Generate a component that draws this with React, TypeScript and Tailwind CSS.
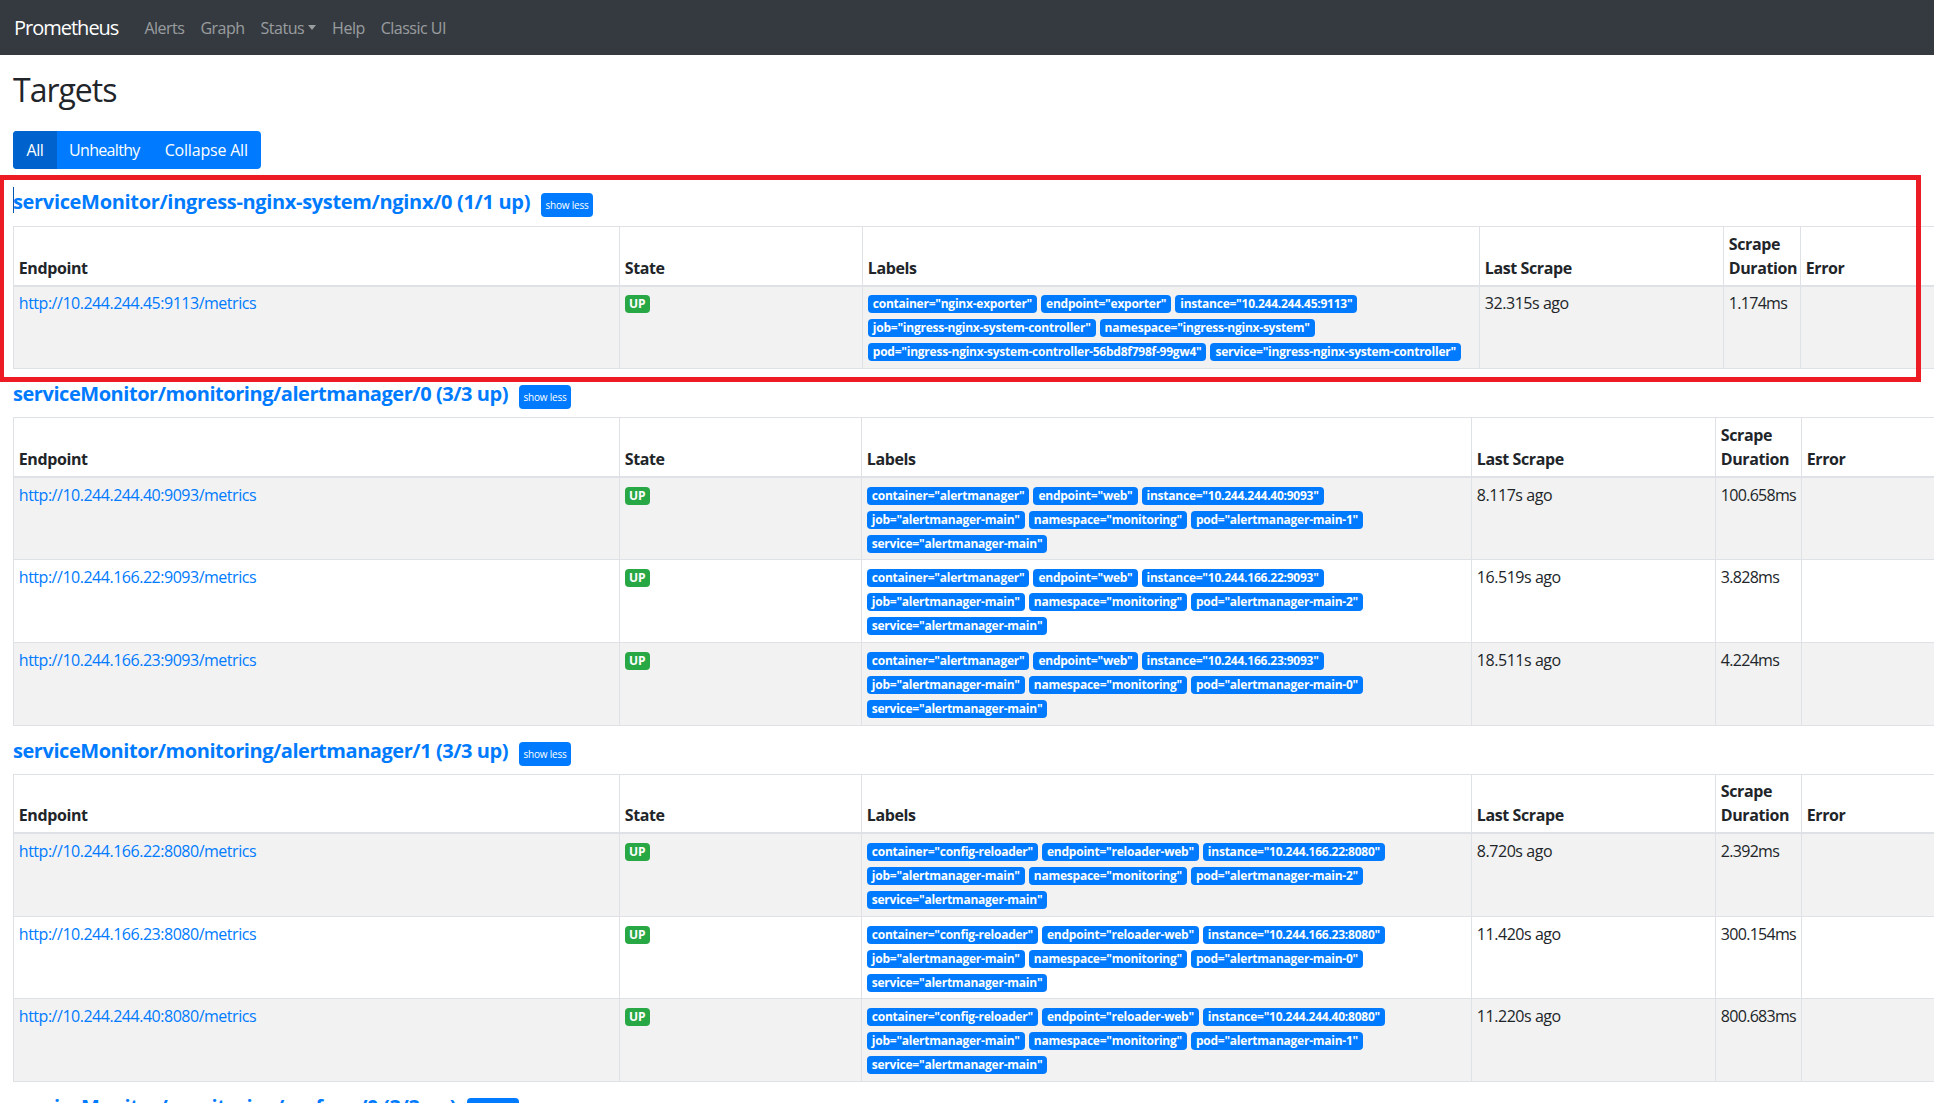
interface Target {
  endpoint: string
  labels: string[]
  lastScrape: string
  duration: string
}

interface Pool {
  name: string
  nameTracking: string
  cols: string[]
  targets: Target[]
  caret?: boolean
}

const amLabels = (container: string, endpoint: string, instance: string, pod: string) => [
  `container="${container}"`,
  `endpoint="${endpoint}"`,
  `instance="${instance}"`,
  'job="alertmanager-main"',
  'namespace="monitoring"',
  `pod="${pod}"`,
  'service="alertmanager-main"',
]

const wideCols = ['w-[606px]', 'w-[242px]', 'w-[610px]', 'w-[244px]', 'w-[86px]']

const pools: Pool[] = [
  {
    name: 'serviceMonitor/ingress-nginx-system/nginx/0 (1/1 up)',
    nameTracking: 'tracking-[-0.33px]',
    cols: ['w-[606px]', 'w-[243px]', 'w-[617px]', 'w-[244px]', 'w-[77px]'],
    caret: true,
    targets: [
      {
        endpoint: 'http://10.244.244.45:9113/metrics',
        labels: [
          'container="nginx-exporter"',
          'endpoint="exporter"',
          'instance="10.244.244.45:9113"',
          'job="ingress-nginx-system-controller"',
          'namespace="ingress-nginx-system"',
          'pod="ingress-nginx-system-controller-56bd8f798f-99gw4"',
          'service="ingress-nginx-system-controller"',
        ],
        lastScrape: '32.315s ago',
        duration: '1.174ms',
      },
    ],
  },
  {
    name: 'serviceMonitor/monitoring/alertmanager/0 (3/3 up)',
    nameTracking: 'tracking-[-0.45px]',
    cols: wideCols,
    targets: [
      {
        endpoint: 'http://10.244.244.40:9093/metrics',
        labels: amLabels('alertmanager', 'web', '10.244.244.40:9093', 'alertmanager-main-1'),
        lastScrape: '8.117s ago',
        duration: '100.658ms',
      },
      {
        endpoint: 'http://10.244.166.22:9093/metrics',
        labels: amLabels('alertmanager', 'web', '10.244.166.22:9093', 'alertmanager-main-2'),
        lastScrape: '16.519s ago',
        duration: '3.828ms',
      },
      {
        endpoint: 'http://10.244.166.23:9093/metrics',
        labels: amLabels('alertmanager', 'web', '10.244.166.23:9093', 'alertmanager-main-0'),
        lastScrape: '18.511s ago',
        duration: '4.224ms',
      },
    ],
  },
  {
    name: 'serviceMonitor/monitoring/alertmanager/1 (3/3 up)',
    nameTracking: 'tracking-[-0.45px]',
    cols: wideCols,
    targets: [
      {
        endpoint: 'http://10.244.166.22:8080/metrics',
        labels: amLabels('config-reloader', 'reloader-web', '10.244.166.22:8080', 'alertmanager-main-2'),
        lastScrape: '8.720s ago',
        duration: '2.392ms',
      },
      {
        endpoint: 'http://10.244.166.23:8080/metrics',
        labels: amLabels('config-reloader', 'reloader-web', '10.244.166.23:8080', 'alertmanager-main-0'),
        lastScrape: '11.420s ago',
        duration: '300.154ms',
      },
      {
        endpoint: 'http://10.244.244.40:8080/metrics',
        labels: amLabels('config-reloader', 'reloader-web', '10.244.244.40:8080', 'alertmanager-main-1'),
        lastScrape: '11.220s ago',
        duration: '800.683ms',
      },
    ],
  },
  {
    name: 'serviceMonitor/monitoring/grafana/0 (3/3 up)',
    nameTracking: 'tracking-[-0.33px]',
    cols: wideCols,
    targets: [],
  },
]

const th = 'border border-b-2 border-[#dee2e6] p-[4.8px] text-left align-bottom font-bold leading-6 tracking-[-0.4px]'
const td = 'border border-[#dee2e6] p-[4.8px] align-top leading-6'

function Badge({ text }: { text: string }) {
  return (
    <span className="h-[18px] whitespace-nowrap rounded-[4px] bg-[#007bff] px-[5px] text-[12px] font-bold leading-[18px] tracking-[-0.24px] text-white">
      {text}
    </span>
  )
}

function PoolSection({ pool }: { pool: Pool }) {
  return (
    <section>
      <div className={`flex h-[39px] items-start ${pool.caret ? '' : 'pt-px'}`}>
        <a className={`relative text-[20px] font-bold leading-[30px] text-[#007bff] ${pool.nameTracking}`}>
          {pool.caret && <span className="absolute left-0 top-0 h-[26px] w-px bg-[#0056b3]" />}
          {pool.name}
        </a>
        <button className="ml-[11px] mt-[6px] h-6 w-[52px] rounded-[4px] bg-[#007bff] text-[10px] leading-6 tracking-[-0.2px] text-white">
          show less
        </button>
      </div>
      <table className="mb-[9px] w-full table-fixed border-collapse">
        <colgroup>
          {pool.cols.map((c) => (
            <col key={c} className={c} />
          ))}
          <col />
        </colgroup>
        <thead>
          <tr>
            <th className={th}>Endpoint</th>
            <th className={th}>State</th>
            <th className={th}>Labels</th>
            <th className={th}>Last Scrape</th>
            <th className={th}>Scrape Duration</th>
            <th className={`${th} border-r-0`}>Error</th>
          </tr>
        </thead>
        <tbody>
          {pool.targets.map((t, i) => (
            <tr key={t.endpoint} className={i % 2 === 0 ? 'bg-[#f2f2f2]' : ''}>
              <td className={td}>
                <a className="tracking-[-0.48px] text-[#007bff]">{t.endpoint}</a>
              </td>
              <td className={td}>
                <span className="mt-[4px] block h-[18px] w-[25px] rounded-[4px] bg-[#28a745] text-center text-[12px] font-bold leading-[18px] text-white">
                  UP
                </span>
              </td>
              <td className={td}>
                <div className="flex flex-wrap gap-x-1 gap-y-1.5 pb-[2px] pt-[4px]">
                  {t.labels.map((l) => (
                    <Badge key={l} text={l} />
                  ))}
                </div>
              </td>
              <td className={`${td} tracking-[-0.45px]`}>{t.lastScrape}</td>
              <td className={`${td} tracking-[-0.7px]`}>{t.duration}</td>
              <td className={`${td} border-r-0`} />
            </tr>
          ))}
        </tbody>
      </table>
    </section>
  )
}

export default function App() {
  return (
    <div className="relative h-[1103px] overflow-hidden bg-white font-['Open_Sans',sans-serif] text-[16px] text-[#212529]">
      <nav className="flex h-[55px] items-center bg-[#343a40] pl-[14px] tracking-[-0.5px] text-white/50">
        <a className="mr-[26px] text-[20px] tracking-[-1px] text-white">Prometheus</a>
        <a className="mr-[16px]">Alerts</a>
        <a className="mr-[16px]">Graph</a>
        <a className="mr-[16px] flex items-center">
          Status
          <svg className="ml-[4px]" width="8" height="5" viewBox="0 0 8 5" fill="currentColor">
            <path d="M0 0h8L4 5z" />
          </svg>
        </a>
        <a className="mr-[16px]">Help</a>
        <a>Classic UI</a>
      </nav>
      <main className="pl-[13px]">
        <h2 className="pt-4 text-[32px] font-medium leading-[38px] tracking-[-1px]">Targets</h2>
        <div className="mb-[18px] mt-[22px] flex h-[38px] w-[248px] overflow-hidden rounded-[4px] bg-[#007bff] leading-[38px] text-white">
          <button className="w-[44px] bg-[#0062cc] tracking-[-0.4px]">All</button>
          <button className="ml-[12px] tracking-[-0.67px]">Unhealthy</button>
          <button className="ml-[25px] tracking-[-0.2px]">Collapse All</button>
        </div>
        {pools.map((p) => (
          <PoolSection key={p.name} pool={p} />
        ))}
      </main>
      <div className="pointer-events-none absolute left-[-1px] top-[175px] h-[207px] w-[1922px] border-[5px] border-[#ed1c24]" />
    </div>
  )
}
